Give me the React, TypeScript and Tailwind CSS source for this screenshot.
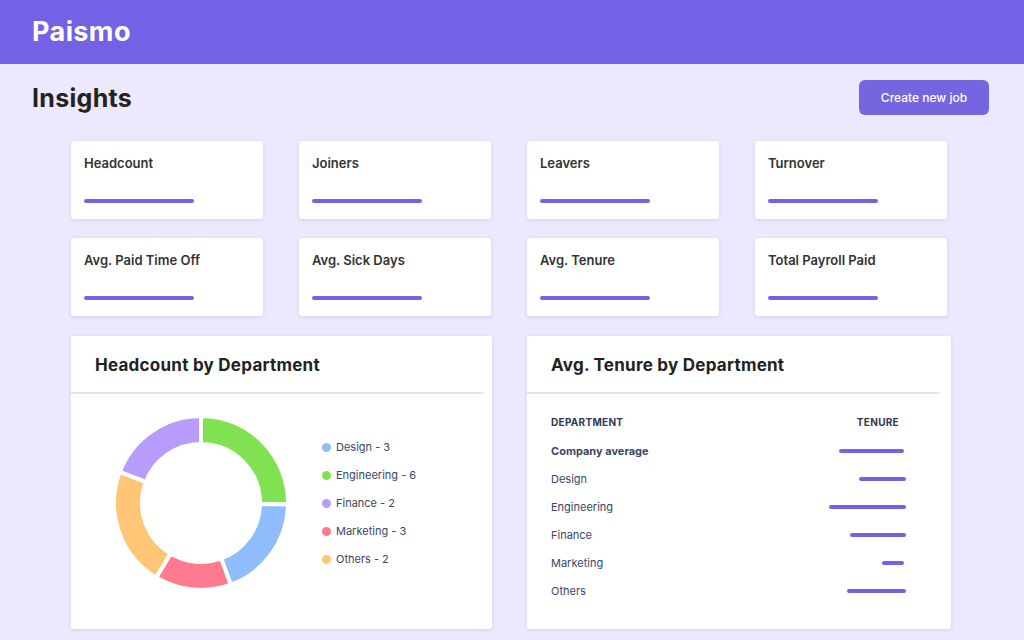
import React from 'react';

const stats = [
  'Headcount',
  'Joiners',
  'Leavers',
  'Turnover',
  'Avg. Paid Time Off',
  'Avg. Sick Days',
  'Avg. Tenure',
  'Total Payroll Paid',
];

const segments = [
  { from: 0, to: 91, color: '#80e250' },
  { from: 91, to: 160, color: '#8fbcfd' },
  { from: 160, to: 211, color: '#ff7a8f' },
  { from: 211, to: 291, color: '#ffc677' },
  { from: 291, to: 360, color: '#b79cfc' },
];

const legend = [
  { label: 'Design - 3', dot: 'bg-[#8fbcfd]' },
  { label: 'Engineering - 6', dot: 'bg-[#80e250]' },
  { label: 'Finance - 2', dot: 'bg-[#b79cfc]' },
  { label: 'Marketing - 3', dot: 'bg-[#ff7a8f]' },
  { label: 'Others - 2', dot: 'bg-[#ffc677]' },
];

const tenure = [
  { dept: 'Company average', w: 65, mr: 2, bold: true },
  { dept: 'Design', w: 47, mr: 0 },
  { dept: 'Engineering', w: 77, mr: 0 },
  { dept: 'Finance', w: 56, mr: 0 },
  { dept: 'Marketing', w: 22, mr: 2 },
  { dept: 'Others', w: 59, mr: 0 },
];

function pt(cx: number, cy: number, r: number, deg: number) {
  const a = ((deg - 90) * Math.PI) / 180;
  return [cx + r * Math.cos(a), cy + r * Math.sin(a)];
}

function sector(from: number, to: number) {
  const cx = 88, cy = 88, R = 87, r = 59;
  const large = to - from > 180 ? 1 : 0;
  const [x1, y1] = pt(cx, cy, R, from);
  const [x2, y2] = pt(cx, cy, R, to);
  const [x3, y3] = pt(cx, cy, r, to);
  const [x4, y4] = pt(cx, cy, r, from);
  return `M${x1} ${y1} A${R} ${R} 0 ${large} 1 ${x2} ${y2} L${x3} ${y3} A${r} ${r} 0 ${large} 0 ${x4} ${y4} Z`;
}

function Donut() {
  return (
    <svg width="176" height="176" viewBox="0 0 176 176">
      {segments.map((s) => (
        <path key={s.from} d={sector(s.from, s.to)} fill={s.color} stroke="#ffffff" strokeWidth="4" strokeLinejoin="miter" />
      ))}
    </svg>
  );
}

export default function App() {
  return (
    <div className="min-h-[640px] bg-[#ece8fd] font-['Inter','Liberation_Sans',sans-serif]">
      <header className="h-16 bg-[#7462e6] px-8 flex items-center">
        <span className="text-[27px] font-bold text-white tracking-[0.4px]">Paismo</span>
      </header>

      <div className="mt-4 pl-8 pr-[35px] flex items-center justify-between h-[35px]">
        <h1 className="text-[25px] font-bold text-[#222222] tracking-[0.3px] pt-[2px]">Insights</h1>
        <button className="w-[130px] h-[35px] rounded-md bg-[#7566e0] text-white text-[12px] font-medium">
          Create new job
        </button>
      </div>

      <div className="ml-[71px] mt-[26px] w-[880px]">
        <div className="grid grid-cols-[repeat(4,192px)] gap-x-9 gap-y-[19px]">
          {stats.map((s) => (
            <div key={s} className="h-[78px] bg-white rounded-[3px] shadow-[0_1px_4px_rgba(80,70,150,0.14)] pt-[13px] px-[13px]">
              <div className="text-[13px] leading-[18px] font-semibold text-[#333333]">{s}</div>
              <div className="mt-[27px] w-[110px] h-[4px] rounded-full bg-[#7462e6]" />
            </div>
          ))}
        </div>

        <div className="mt-[20px] grid grid-cols-[421px_424px] gap-[35px]">
          <div className="h-[293px] bg-white rounded-[3px] shadow-[0_1px_4px_rgba(80,70,150,0.14)]">
            <div className="h-[58px] mr-2 border-b-2 border-[#e6e6e6] flex items-center px-6 pt-1">
              <h2 className="text-[17px] font-bold text-[#222222] tracking-[0.25px]">Headcount by Department</h2>
            </div>
            <div className="flex items-center pl-[42px] pt-[21px]">
              <Donut />
              <div className="ml-[33px] flex flex-col">
                {legend.map((l) => (
                  <div key={l.label} className="h-[28px] flex items-center gap-[5px]">
                    <span className={`w-[9px] h-[9px] rounded-full ${l.dot}`} />
                    <span className="text-[11px] text-[#3b4566]">{l.label}</span>
                  </div>
                ))}
              </div>
            </div>
          </div>

          <div className="h-[293px] bg-white rounded-[3px] shadow-[0_1px_4px_rgba(80,70,150,0.14)]">
            <div className="h-[58px] mr-[11px] border-b-2 border-[#e6e6e6] flex items-center px-6 pt-1">
              <h2 className="text-[17px] font-bold text-[#222222] tracking-[0.25px]">Avg. Tenure by Department</h2>
            </div>
            <div className="pt-[17px] pl-6 pr-[45px]">
              <div className="h-[22px] flex items-center justify-between text-[10px] font-bold text-[#2f3958] tracking-[0.3px]">
                <span>DEPARTMENT</span>
                <span className="mr-[7px]">TENURE</span>
              </div>
              <div className="mt-[4px]">
                {tenure.map((t) => (
                  <div key={t.dept} className="h-[28px] flex items-center justify-between">
                    <span className={`text-[11px] text-[#3b4566] ${t.bold ? 'font-bold' : ''}`}>{t.dept}</span>
                    <span className="h-[4px] rounded-full bg-[#7462e6]" style={{ width: t.w, marginRight: t.mr }} />
                  </div>
                ))}
              </div>
            </div>
          </div>
        </div>
      </div>
    </div>
  );
}
